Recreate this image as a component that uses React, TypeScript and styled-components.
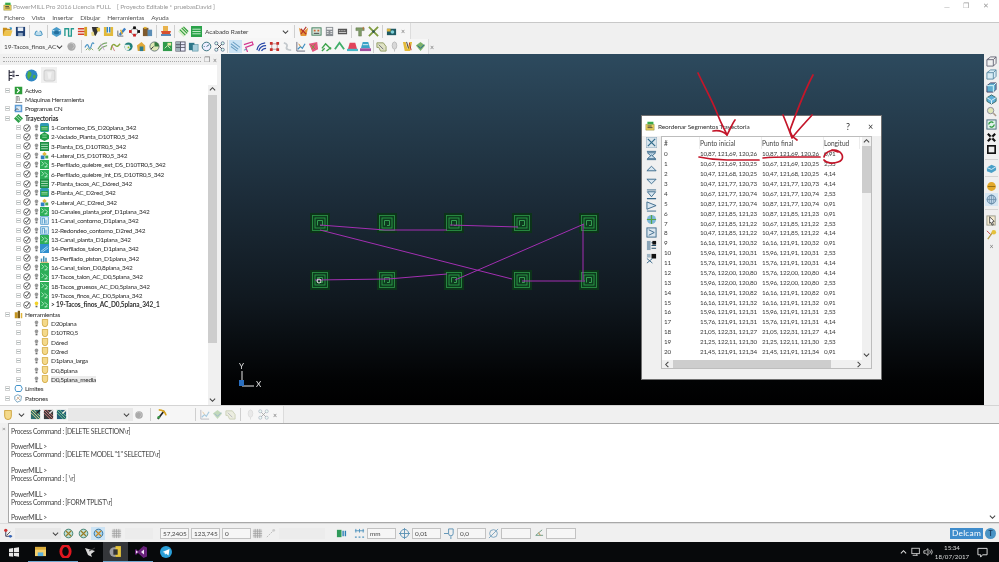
import React from 'react';
import styled, { createGlobalStyle } from 'styled-components';

const Global = createGlobalStyle`
  html, body { margin: 0; padding: 0; background: #f0f0f0; }
  body { font-family: Lato, "Liberation Sans", sans-serif; }
`;

const ICONS: Record<string, React.ReactNode> = {
  folder: <><path d="M1 2h4l1 1h4v2H4L2 10H1z" fill="#c98f1c" /><path d="M3 5h8.500l-2 6H1z" fill="#eec34d" /><path d="M8 1l3 1-1 3z" fill="#2b8fc9" /></>,
  save: <><rect x="1" y="1" width="10" height="10" fill="#1f3f73" /><rect x="3" y="1.500" width="6" height="4" fill="#e8eef5" /><rect x="3.500" y="7.500" width="5" height="3.500" fill="#8fa6c2" /></>,
  blob: <><path d="M2 9a4 4 0 1 1 8 0c1 2-8 2-8 0z" fill="#bcdcec" stroke="#3a8cbc" /><circle cx="6" cy="5" r="1.500" fill="#f5f5f5" /></>,
  cube: <><path d="M1 4l5-3 5 3v5l-5 3-5-3z" fill="#4a9cc9" /><path d="M1 4l5 3 5-3" fill="none" stroke="#e4f2fa" /><ellipse cx="6" cy="7" rx="3" ry="2" fill="#246f9e" /></>,
  path: <path d="M1 11V3h4v8h3V3h3" fill="none" stroke="#259a8f" strokeWidth="1.500" />,
  stack: <><path d="M1 3h7M1 6h9M1 9h7" stroke="#d8402a" strokeWidth="1.800" /><rect x="8" y="1" width="3" height="10" fill="#d6a326" /></>,
  drill: <><path d="M2 1h7v4l-3 6-1-1-1 0z" fill="#333" /><path d="M7 2h4v4H8z" fill="#e2c13a" /><path d="M1 7l3-1 1 5H2z" fill="#e8d98a" /></>,
  ublue: <><path d="M1 1h3v7h4V1h3v10H1z" fill="#e2b93a" /><path d="M4 1h1.500v6H4zM6.500 1H8v6H6.500z" fill="#2c83c7" /></>,
  pen: <><path d="M2 11V5M2 11h6" stroke="#666" /><path d="M3 9l6-7 2 1.500-6 7z" fill="#3d7fc4" /><path d="M5 4l2 5" stroke="#e2b12c" strokeWidth="1.500" /></>,
  nodes: <><path d="M6 1l5 5-5 5-5-5z" fill="none" stroke="#444" strokeDasharray="2 1" /><rect x="4.500" y=".5" width="3" height="3" fill="#111" /><rect x="0" y="4.500" width="3" height="3" fill="#c22" /><rect x="9" y="4.500" width="3" height="3" fill="#111" /><rect x="4.500" y="8.500" width="3" height="3" fill="#c22" /></>,
  chip: <><rect x="1" y="2" width="6" height="9" fill="#7f5a2e" /><rect x="6" y="4" width="5" height="7" fill="#5b8db5" /><path d="M2 1h3v2H2z" fill="#e2b12c" /></>,
  cup: <><path d="M3 1h5v5H3z" fill="#e9b34c" /><path d="M1 6h10l-1 3H2z" fill="#d8502f" /><rect x="1" y="9" width="10" height="2" fill="#5b88b5" /></>,
  stripes: <><path d="M6 0l6 6-6 6-6-6z" fill="#d8efc8" /><path d="M2 4l6 6M4 2l6 6M6 1l5 5" stroke="#2f9a3c" strokeWidth="1.200" /></>,
  greenbox: <><rect x="0" y="0" width="12" height="12" fill="#2ba24a" /><path d="M1.500 3.500h9M1.500 6h9M1.500 8.500h9" stroke="#c8f0d0" /></>,
  orange: <><path d="M1 2l5 4 5-4-2 9H3z" fill="#e39538" /><path d="M3 3l6 6M9 1l-6 8" stroke="#b5302a" strokeWidth="1.200" /></>,
  calc: <><rect x="1" y="2" width="10" height="8" fill="#d6e6dc" stroke="#3f7d5a" /><path d="M3 4h2v2H3zM7 4h2v2H7z" fill="#c63" /><path d="M3 8h6" stroke="#333" /></>,
  bin: <><rect x="2" y="1" width="8" height="10" fill="#8a8f94" /><rect x="3" y="2" width="6" height="2" fill="#f0f0f0" /><path d="M3 6h2M7 6h2M3 8h2M7 8h2" stroke="#eee" /></>,
  ruler: <><rect x="1" y="3" width="10" height="6" fill="#555" /><path d="M2 5h1M4 5h1M6 5h1M8 5h1M2 7h8" stroke="#ddd" /></>,
  tee: <><path d="M1 2h9v3H7v6H4V5H1z" fill="#7f9d68" stroke="#5b6b44" strokeWidth=".5" /><path d="M9 1v3" stroke="#c63" /></>,
  cross: <><path d="M1 1l10 10M11 1L1 11" stroke="#7e9b3e" strokeWidth="2" /><circle cx="6" cy="6" r="1.500" fill="#355" /></>,
  cam: <><rect x="1" y="3" width="10" height="7" fill="#1f5a63" /><rect x="1" y="3" width="4" height="3" fill="#d8b13b" /><circle cx="7" cy="6.500" r="2" fill="#7fd0d8" /></>,
  ball: <><circle cx="6" cy="6" r="4.500" fill="#aaa" /><path d="M3 4l2-2 3 1 1 3-2 3" fill="none" stroke="#c8c8c8" /></>,
  swirl: <><path d="M1 7c2-4 3-4 4-1s2 3 3-1 2-3 3-2" fill="none" stroke="#4a95c4" strokeWidth="1.300" /><path d="M2 10l2-2 2 2 2-2 2 2" fill="none" stroke="#86a868" /></>,
  swirl2: <><path d="M1 9c3-6 6-7 10-7M2 11c3-5 6-5 9-6" fill="none" stroke="#7ba66a" strokeWidth="1.200" /><path d="M4 3l4 7" stroke="#c7a4d4" /></>,
  swirl3: <><path d="M1 10c1-7 3-7 5-5s3 0 5-2" fill="none" stroke="#8aa83c" strokeWidth="1.500" /><path d="M2 5l3 6" stroke="#c77" /></>,
  round: <><circle cx="6" cy="6" r="4.500" fill="#1f7f7a" /><path d="M1 4h6l1 3-2 3H3z" fill="#e8f0ea" /><circle cx="6" cy="7" r="1" fill="#9b2" /></>,
  house: <><path d="M1 5l5-4 4 4v6H2z" fill="#e0a93a" /><path d="M4 6h4v5H4z" fill="#2d7d8f" /></>,
  pie: <><circle cx="6" cy="6" r="5" fill="#dfe8b6" stroke="#677" /><path d="M6 6V1a5 5 0 0 1 5 5z" fill="#357a3f" /><path d="M2 9l3-3" stroke="#223" /></>,
  boxes: <><rect x="1" y="1" width="10" height="10" fill="#2f9a4a" /><path d="M3 8l3-3 3 3" stroke="#d9f0c2" fill="none" /><rect x="6" y="2" width="4" height="3" fill="#e8e8a0" /></>,
  grid: <><rect x="1" y="1" width="10" height="10" fill="#eef" stroke="#556" /><rect x="1" y="1" width="5" height="10" fill="#9fb0b8" /><path d="M1 4h10M1 7h10M6 1v10" stroke="#556" /></>,
  copy: <><rect x="1" y="2" width="6" height="8" fill="#2d7588" /><rect x="5" y="4" width="6" height="7" fill="#a9cfdc" stroke="#2d7588" strokeWidth=".5" /></>,
  gauge: <><circle cx="6" cy="6" r="4.700" fill="#eef" stroke="#2d6b77" /><path d="M6 6l3-2M3 6h1" stroke="#2d6b77" /></>,
  xnodes: <><path d="M2 2l8 8M10 2l-8 8" stroke="#333" strokeWidth=".9" /><circle cx="2.500" cy="2.500" r="1.700" fill="#dfe" stroke="#236" strokeWidth=".6" /><circle cx="9.500" cy="2.500" r="1.700" fill="#dfe" stroke="#236" strokeWidth=".6" /><circle cx="2.500" cy="9.500" r="1.700" fill="#dfe" stroke="#236" strokeWidth=".6" /><circle cx="9.500" cy="9.500" r="1.700" fill="#dfe" stroke="#236" strokeWidth=".6" /></>,
  waves: <><path d="M1 3l8 6M1 6l7 5M3 1l8 6" fill="none" stroke="#6a9fc4" strokeWidth="1.100" /></>,
  wedge: <><path d="M1 4l9-3 1 3-8 3 2 5" fill="none" stroke="#d3358f" strokeWidth="1.300" /><path d="M1 10l3-1" stroke="#4e96b8" /></>,
  ripple: <><path d="M1 10c1-5 3-7 9-8M3 11c1-4 3-6 8-6M6 11c1-2 2-3 5-3" fill="none" stroke="#2546a8" strokeWidth="1.300" /></>,
  squares: <><path d="M3 3h6v6H3z" fill="none" stroke="#b99" /><path d="M1 1h3v3H1zM8 1h3v3H8zM1 8h3v3H1zM8 8h3v3H8z" fill="#c8302a" /></>,
  faint: <path d="M2 2c4 1 4 3 3 5s3 3 5 3" fill="none" stroke="#c3c8cc" strokeWidth="2" />,
  fork: <><path d="M2 11V1M2 11h9" stroke="#667" /><path d="M3 9l3-3 2 2 3-5" fill="none" stroke="#3f8fc0" strokeWidth="1.300" /><path d="M4 3l2 3" stroke="#d68a2a" /></>,
  cone: <><path d="M1 3l9-2 1 8-6 3z" fill="#e5547f" /><path d="M3 4l5 5M8 3l-4 6" stroke="#7a9640" /></>,
  green2: <path d="M1 8l4-5 6 6M1 11l3-3M6 11l5-4" fill="none" stroke="#3ca34a" strokeWidth="1.500" />,
  green3: <path d="M1 9l5-7 5 7" fill="none" stroke="#3fae6a" strokeWidth="2" />,
  hatred: <><path d="M3 2h6l2 7H1z" fill="#e2435a" /><rect x="0" y="8.500" width="12" height="2.500" fill="#48b8c8" /></>,
  hatblue: <><path d="M3 1h6l2 7H1z" fill="#3aa3c7" /><path d="M3 4h6" stroke="#e4f2fa" /><rect x="0" y="8" width="12" height="3" fill="#a24e9e" /></>,
  sand: <><path d="M1 2h7l3 4v5H5L3 7H1z" fill="#dfe2c4" stroke="#8f9a60" /><path d="M3 4l5 5" stroke="#667" /></>,
  pin: <><ellipse cx="6" cy="5" rx="2.500" ry="4" fill="#d8d8d8" stroke="#bbb" /><path d="M6 9v2.500" stroke="#bbb" /></>,
  cutter: <><path d="M1 1h3l2 8 2-8h3l-2 10H3z" fill="#e4bb3a" /><path d="M5 1l2 7" stroke="#333" /><path d="M8 2l2 8" stroke="#b33" /></>,
  blockgreen: <><path d="M1 5l5-4 5 4-5 6z" fill="#7cb26a" /><path d="M3 5l3 3 4-4" stroke="#1e5ea0" fill="none" /></>,
  hatch1: <><rect x="1" y="1" width="10" height="10" fill="#2f6f6f" /><path d="M1 1l10 10M4 1l7 7M1 4l7 7" stroke="#e8d98a" /><path d="M11 1L7 5" stroke="#222" strokeWidth="1.500" /></>,
  hatch2: <><rect x="1" y="1" width="10" height="10" fill="#3d3d3d" /><path d="M1 1l10 10M4 1l7 7M1 4l7 7" stroke="#d87a7a" /><path d="M11 1L7 5" stroke="#ddd" strokeWidth="1.500" /></>,
  hatch3: <><rect x="1" y="1" width="10" height="10" fill="#245f77" /><path d="M1 1l10 10M4 1l7 7M1 4l7 7" stroke="#7cd08a" /><path d="M11 1L7 5" stroke="#eed" strokeWidth="1.500" /></>,
  pick: <><path d="M2 11l7-9" stroke="#222" strokeWidth="1.800" /><path d="M3 1c4 0 7 2 8 6" fill="none" stroke="#d9a520" strokeWidth="1.800" /><circle cx="3" cy="9" r="1.500" fill="#3a9a4a" /></>,
  axes: <><path d="M3 2v7h7" stroke="#335" fill="none" /><circle cx="3" cy="2.500" r="1.800" fill="#c33" /><circle cx="8" cy="9" r="1.500" fill="#36b" /><path d="M4 8l4-4" stroke="#555" /></>,
  tpBox: <><rect x="0" y="0" width="12" height="12" fill="#2f9ab5" rx="2" /><rect x="1" y="4" width="10" height="7" fill="#2ba24a" /><path d="M2 6h8M2 8h8" stroke="#bfeacb" strokeWidth=".8" /></>,
  tp3d: <><path d="M0 4l6-4 6 4v5l-6 3-6-3z" fill="#1f9b44" /><path d="M3 4h6M3 7h6" stroke="#a9e8b8" /></>,
  tpStr: <><rect x="0" y="0" width="12" height="12" fill="#1e9246" /><path d="M1.500 3h9M1.500 6h9M1.500 9h9" stroke="#d0f2da" strokeWidth="1" /></>,
  tpCross: <><path d="M6 1l3 3-3 3-3-3z" fill="#e2b73a" /><path d="M1 6h5v5H1z" fill="#2d7fc0" /><path d="M7 6h4v4H7z" fill="#45a850" /></>,
  tpGreen: <><rect x="0" y="0" width="12" height="12" fill="#2dae58" /><path d="M2 2l3 3-3 3M6 3l4 3-3 4M6 9h4" fill="none" stroke="#c9f5d8" strokeWidth="1" /></>,
  tpCont: <><rect x="1" y="1" width="10" height="10" fill="#dff1f7" stroke="#2f86c3" /><path d="M3 10V3h3v7M8 10V5" stroke="#2f86c3" fill="none" /></>,
  tpDiag: <><rect x="0" y="0" width="12" height="12" fill="#2f8fce" /><path d="M1 10l9-7M3 11l8-6" stroke="#c8f0ff" /></>,
  tpFan: <><path d="M1 11V6h2v5M4 11V3h2v8M7 11V5h2v6" fill="#3f8fb5" /><path d="M1 11h10" stroke="#d69a2a" /></>,
  dlgX: <><rect x="0" y="0" width="12" height="12" fill="#d8e4ec" stroke="#8aa5b8" /><path d="M2 2l8 8M10 2l-8 8" stroke="#2f6a8a" strokeWidth="1.300" /></>,
  dlgTop: <><path d="M1 1.500h10M1 10.500h10" stroke="#38688a" /><path d="M1.500 3l9 0-4.500 4z" fill="#c8dcea" stroke="#38688a" /><path d="M1.500 9.500l9 0-4.500-4z" fill="#c8dcea" stroke="#38688a" /></>,
  dlgUp: <path d="M1 8.500h10L6 3.500z" fill="#d8e6f0" stroke="#38688a" />,
  dlgDown: <path d="M1 3.500h10L6 8.500z" fill="#d8e6f0" stroke="#38688a" />,
  dlgBot: <><path d="M1 10.500h10" stroke="#38688a" strokeWidth="1.400" /><path d="M1.500 3h9L6 8.500z" fill="#d8e6f0" stroke="#38688a" /><path d="M1 1h10" stroke="#38688a" /></>,
  dlgSwap: <><path d="M1 1l10 4v0L1 9z" fill="#d8e6f0" stroke="#38688a" /><path d="M1 11h10" stroke="#38688a" /></>,
  dlgGlobe: <><circle cx="6" cy="6" r="5" fill="#7db8d8" /><path d="M1 6h10M6 1v10" stroke="#58a248" strokeWidth="1.300" /></>,
  dlgList: <><rect x="1" y="1" width="10" height="10" fill="#dbe6ee" stroke="#38688a" /><path d="M3 3l6 3-6 3" stroke="#38688a" fill="none" /></>,
  dlgDots: <><rect x="1" y="1" width="4" height="10" fill="#8aa5b8" /><path d="M6 3l5 0M6 6l5 0M6 9l5 0" stroke="#25506b" strokeWidth="1.200" /><rect x="7" y="1" width="4" height="4" fill="#111" /></>,
  dlgMore: <><rect x="6" y="1" width="5" height="5" fill="#111" /><path d="M1 6l6 5M1 11l6-5" stroke="#38688a" /><rect x="1" y="1" width="4" height="4" fill="#9fb5c4" /></>,
  wire: <path d="M1 4l4-3h6v7l-3 3H1zM1 4h7v7M8 4l3-3" fill="none" stroke="#667" />,
  wire2: <><path d="M1 4l4-3h6v7l-3 3H1z" fill="#d8ecf5" stroke="#5b8ba5" /><path d="M1 4h7v7M8 4l3-3" fill="none" stroke="#5b8ba5" /></>,
  wire3: <><path d="M1 4l4-3h6v7l-3 3H1z" fill="#5faed0" stroke="#446" /><path d="M1 4h7v7M8 4l3-3" fill="none" stroke="#dff" /></>,
  wire4: <><path d="M1 4l5-3 5 3v4l-5 3-5-3z" fill="#5fb0d8" stroke="#366" /><path d="M1 4l5 3 5-3M6 7v4" fill="none" stroke="#e6f5fc" /></>,
  zoomi: <><circle cx="5" cy="5" r="3.500" fill="#dfe7b8" stroke="#889" /><path d="M8 8l3 3" stroke="#a98" strokeWidth="1.600" /></>,
  refresh: <><rect x="1" y="1" width="10" height="10" fill="#dff1ea" stroke="#467" /><path d="M3 6a3 3 0 0 1 5-2M9 6a3 3 0 0 1-5 2" fill="none" stroke="#2a9a3c" strokeWidth="1.400" /></>,
  blackx: <><path d="M2 2l8 8M10 2l-8 8" stroke="#111" strokeWidth="2.400" /><circle cx="6" cy="6" r="1.400" fill="#fff" /></>,
  blacksq: <><rect x="2" y="2" width="8" height="8" fill="#eee" stroke="#111" strokeWidth="1.800" /></>,
  part: <><path d="M1 5l5-3 5 2v4l-5 3-5-2z" fill="#4ba0c8" /><path d="M1 5l5 2 5-3" stroke="#dff3fa" fill="none" /></>,
  sphere: <><circle cx="6" cy="6" r="4.800" fill="#e2a92b" /><path d="M2 6h8" stroke="#8f6a16" /></>,
  orb: <><circle cx="6" cy="6" r="4.800" fill="#bcd3e6" stroke="#6085a3" /><path d="M1 6h10M6 1v10" stroke="#6085a3" strokeWidth=".7" /><ellipse cx="6" cy="6" rx="2.500" ry="4.800" fill="none" stroke="#6085a3" strokeWidth=".7" /></>,
  cursorbox: <><rect x="1" y="1" width="9" height="10" fill="#f4ead0" stroke="#998" /><path d="M4 2l5 5-2 .5 1 3-1.500 .5-1-3L4 9z" fill="#fff" stroke="#222" strokeWidth=".8" /></>,
  keys: <><path d="M2 11l5-7" stroke="#b9a24c" strokeWidth="1.500" /><circle cx="8.500" cy="3.500" r="2.500" fill="#e5c13c" /><path d="M1 2l4 4" stroke="#c04040" /></>,
  wheels: <><circle cx="6" cy="6" r="4.700" fill="#bde0d8" stroke="#3b7d6f" /><path d="M3 3l6 6M3 9l6-6" stroke="#9a7c24" strokeWidth="1.200" /></>,
  wheelsblue: <><circle cx="6" cy="6" r="4.700" fill="#a9d4ec" stroke="#2c6f9f" /><path d="M3 3l6 6M3 9l6-6" stroke="#c8871f" strokeWidth="1.200" /></>,
  meshgrid: <><rect x="1" y="1" width="10" height="10" fill="#ddd" /><path d="M1 3.500h10M1 6h10M1 8.500h10M3.500 1v10M6 1v10M8.500 1v10" stroke="#999" strokeWidth=".7" /></>,
  statusgreen: <><rect x="1" y="2" width="5" height="8" fill="#2f9a5a" /><rect x="7" y="3" width="1.500" height="6" fill="#2a7fb5" /><rect x="9.500" y="3" width="1.500" height="6" fill="#2a7fb5" /></>,
  statusruler: <><path d="M1 3h10M2 1v4M6 1v4M10 1v4" stroke="#4f93bd" /><path d="M1 10h2M5 10h2M9 10h2" stroke="#4f93bd" strokeWidth="1.500" /></>,
  crosshair: <><circle cx="6" cy="6" r="4.500" fill="none" stroke="#5a90b3" /><path d="M0 6h12M6 0v12" stroke="#5a90b3" /></>,
  toolin: <><path d="M0 6h5" stroke="#5a90b3" /><path d="M5 1h5v5a2.500 2.500 0 0 1-5 0z" fill="none" stroke="#5a90b3" /><path d="M7.500 9v3" stroke="#5a90b3" /></>,
  dia: <><circle cx="6" cy="6" r="4.200" fill="none" stroke="#7aa2be" /><path d="M1 11L11 1" stroke="#7aa2be" /></>,
  angle: <><path d="M10 2L3 8h8" fill="none" stroke="#6b9a82" /><path d="M6 5l2 3" stroke="#c58a40" /></>,
  diag: <><path d="M2 10l8-8" stroke="#bbb" strokeDasharray="2 1" /><circle cx="9.500" cy="2.500" r="1.500" fill="#ccc" /></>,
  win: <path d="M0 2l5-.7V6H0zM6 1.200L12 .3V6H6zM0 7h5v4.700L0 11zM6 7h6v4.700l-6-.9z" fill="#e8e8e8" />,
  explorer: <><rect x="0" y="1" width="12" height="10" fill="#f3cf6b" /><rect x="0" y="1" width="12" height="3" fill="#d9ab3a" /><rect x="3" y="7" width="6" height="4" fill="#5ab0e0" /></>,
  opera: <ellipse cx="6" cy="6" rx="4.300" ry="5.500" fill="none" stroke="#e0161f" strokeWidth="2.600" />,
  gadget: <><path d="M1 2l10 3-4 3 1 3-4-2z" fill="#d8d8d8" /><path d="M5 5l6-3" stroke="#444" /></>,
  pm: <><circle cx="5" cy="6.500" r="4.500" fill="#9a9aa0" /><path d="M6 1h5v10H6z" fill="#e5c33a" /><path d="M4 4h4v5H4z" fill="#333" /></>,
  vs: <><path d="M8.500 0l3.500 1.500v9L8.500 12 3 7l-2 2-1-1V4l1-1 2 2z" fill="#68217a" /><path d="M9 3.500L6 6l3 2.500z" fill="#f2e6f6" /><path d="M1 4.500l2 1.500-2 1.500z" fill="#f2e6f6" /></>,
  telegram: <><circle cx="6" cy="6" r="6" fill="#2a9fd8" /><path d="M2.500 6l7-3-1 6.500-2.500-2-1 1.300-.5-2.300z" fill="#fff" /></>,
  bulb: <><path d="M2.800 4a3.200 3.200 0 1 1 6.400 0c0 1.500-1.400 2.200-1.400 3.500H4.200C4.200 6.200 2.800 5.500 2.800 4z" fill="#9a9a9a" /><rect x="4.400" y="8.300" width="3.200" height="2.500" fill="#666" /></>,
  bulbon: <><path d="M2.800 4a3.200 3.200 0 1 1 6.400 0c0 1.500-1.400 2.200-1.400 3.500H4.200C4.200 6.200 2.800 5.500 2.800 4z" fill="#f2d22a" /><rect x="4.400" y="8.300" width="3.200" height="2.500" fill="#666" /></>,
  check: <><circle cx="6" cy="6" r="5" fill="#fff" stroke="#333" strokeWidth="1" /><path d="M3.200 6l2 2.200L9 3" fill="none" stroke="#111" strokeWidth="1.200" /></>,
  tool: <><path d="M2 .5h8v7a4 4 0 0 1-8 0z" fill="#f4d98a" stroke="#c99a2a" /></>,
  active: <><rect x="1" y="1" width="10" height="10" fill="#2d9c3a" /><path d="M4 3l3 3-3 3" fill="none" stroke="#fff" strokeWidth="1.500" /></>,
  machine: <><path d="M2 10h9M3 10V2M5 2v6M7 3v5M3 2h4" stroke="#777" fill="none" /></>,
  cn: <><rect x="1" y="1" width="10" height="10" fill="#5b9bd5" /><path d="M3 3h6v6H3z" fill="#d9e8f5" /><path d="M1 9l3-3 2 2" stroke="#333" fill="none" /></>,
  traj: <><path d="M6 0l6 6-6 6-6-6z" fill="#2fa04a" /><path d="M3 4l5 5M5 2.500l5 5" stroke="#d6f5df" /></>,
  tools: <><path d="M1 3h4v8H1z" fill="#c4941f" /><path d="M5 1h3v10H5z" fill="#7a5c1a" /><path d="M9 4h2v7H9z" fill="#e0b43a" /></>,
  limit: <path d="M3 2h6l2 4-2 4H3C1 8 1 4 3 2z" fill="none" stroke="#3a8fc9" strokeWidth="1.300" />,
  pattern: <><path d="M1 3l4-2 5 2-1 6-5 2-3-4z" fill="none" stroke="#5c92b3" /><path d="M4 4l4 4M8 3L3 8" stroke="#c0a080" /></>,
  tab1: <><path d="M2 1v10M2 3h3M2 6h3M2 9h3" stroke="#223" fill="none" /><rect x="5" y="1.500" width="2" height="2.500" fill="#556" /><rect x="5" y="5" width="2" height="2.500" fill="#556" /><path d="M8 6h3" stroke="#223" /></>,
  earth: <><circle cx="6" cy="6" r="5.500" fill="#2e86c4" /><path d="M3 2c2 0 3 1 3 3S4 7 4 9 2 8 2 6z" fill="#4fae46" /><path d="M8 5l2 1-1 3-2-1z" fill="#4fae46" /></>,
  ghost: <><rect x="1" y="1" width="10" height="10" rx="2" fill="#e4e4e4" stroke="#d0d0d0" /><path d="M4 3h4l-1 6H5z" fill="#f2f2f2" /></>,
  dlgIcon: <><path d="M1 4h10v7H1z" fill="#e9cf5e" stroke="#7a7a2a" strokeWidth=".5" /><path d="M3 4V1h7v3" fill="#3fa64a" stroke="#1e5" strokeWidth=".2" /><path d="M3 6h5M3 8h6" stroke="#333" /></>,
  monitor: <><rect x="1" y="1.500" width="9" height="6.500" fill="none" stroke="#ddd" /><path d="M7 8v2M2 10h6" stroke="#ddd" /></>,
  speaker: <><path d="M1 4.500h2L6 2v8L3 7.500H1z" fill="none" stroke="#ddd" /><path d="M8 4a3 3 0 0 1 0 4M10 3a5 5 0 0 1 0 6" fill="none" stroke="#ddd" /></>,
  notif: <path d="M1 1.500h10v7H6L4 11V8.500H1z" fill="none" stroke="#e8e8e8" />,
};

const IconSvg = styled.svg<{ $dim?: boolean }>`
  display: block;
  flex: none;
  opacity: ${p => (p.$dim ? 0.42 : 1)};
`;

function Ico({ k, s = 11, dim }: { k: string; s?: number; dim?: boolean }) {
  return <IconSvg $dim={dim} width={s} height={s} viewBox="0 0 12 12">{ICONS[k]}</IconSvg>;
}

const Chev = ({ up, left, right, c = '#444' }: { up?: boolean; left?: boolean; right?: boolean; c?: string }) => {
  const d = up ? 'M1 5l3-3 3 3' : left ? 'M5 1L2 4l3 3' : right ? 'M3 1l3 3-3 3' : 'M1 3l3 3 3-3';
  return <IconSvg width={7} height={7} viewBox="0 0 8 8"><path d={d} fill="none" stroke={c} strokeWidth="1.200" /></IconSvg>;
};

const Page = styled.div`
  position: relative;
  width: 999px;
  height: 562px;
  overflow: hidden;
  display: flex;
  flex-direction: column;
  background: #f0f0f0;
  color: #333;
  font-size: 6.7px;
  filter: blur(0.4px);
`;

const TitleBar = styled.div`
  height: 12px;
  background: #fff;
  display: flex;
  align-items: center;
  padding-left: 3px;
  gap: 1px;
  color: #9a9a9a;
  font-size: 6.5px;
  letter-spacing: -0.13px;
  white-space: pre;
`;
const WinControls = styled.div`
  margin-left: auto;
  display: flex;
  align-items: center;
  gap: 14px;
  padding-right: 10px;
  color: #999;
`;
const MenuBar = styled.div`
  height: 10px;
  background: #fff;
  display: flex;
  align-items: center;
  padding-left: 4px;
  gap: 7px;
  font-size: 6.5px;
  letter-spacing: -0.12px;
  color: #555;
  border-bottom: 1px solid #c8c8c8;
  box-sizing: content-box;
`;
const ToolRow = styled.div<{ $h: number }>`
  height: ${p => p.$h}px;
  display: flex;
  align-items: center;
  background: #f0f0f0;
`;
const Strip = styled.div<{ $w: number; $pl?: number }>`
  width: ${p => p.$w}px;
  box-sizing: border-box;
  padding-left: ${p => p.$pl ?? 1}px;
  height: 100%;
  display: flex;
  align-items: center;
  background: #f6f6f6;
  border-right: 1px solid #dcdcdc;
`;
const Slot = styled.div<{ $w?: number; $hi?: boolean }>`
  width: ${p => p.$w ?? 13}px;
  height: 13px;
  flex: none;
  display: flex;
  align-items: center;
  justify-content: center;
  background: ${p => (p.$hi ? '#cde4f5' : 'transparent')};
`;
const Sep = styled.div<{ $w?: number; $c?: string }>`
  width: ${p => p.$w ?? 5}px;
  height: 13px;
  flex: none;
  display: flex;
  justify-content: center;
  &::after { content: ""; width: 1px; height: 100%; background: ${p => p.$c ?? '#cfcfcf'}; }
`;
const CloseMark = styled.span`
  color: #777;
  font-size: 7px;
  width: 10px;
  text-align: center;
  flex: none;
`;
const Combo = styled.div<{ $w: number; $bg?: string }>`
  width: ${p => p.$w}px;
  height: 13px;
  flex: none;
  box-sizing: border-box;
  background: ${p => p.$bg ?? '#f8f8f8'};
  display: flex;
  align-items: center;
  padding: 0 3px 0 2px;
  color: #444;
  font-size: 6.5px;
  letter-spacing: -0.1px;
  white-space: nowrap;
  & > svg:last-child { margin-left: auto; }
`;

const Main = styled.div`
  height: 351px;
  display: flex;
`;
const LeftPanel = styled.div`
  width: 221px;
  flex: none;
  display: flex;
  flex-direction: column;
  box-sizing: border-box;
  padding-right: 4px;
`;
const PanelHead = styled.div`
  height: 11px;
  display: flex;
  align-items: center;
  padding-left: 3px;
  gap: 3px;
  color: #777;
`;
const Grip = styled.div`
  flex: 1;
  height: 3px;
  border-top: 1px dotted #aaa;
  border-bottom: 1px dotted #aaa;
`;
const TabBar = styled.div`
  height: 20px;
  background: #fff;
  display: flex;
  align-items: center;
  padding-left: 5px;
  gap: 2px;
`;
const Tab = styled.div<{ $on?: boolean }>`
  width: 16px;
  height: 16px;
  display: flex;
  align-items: center;
  justify-content: center;
  background: ${p => (p.$on ? '#fff' : '#f0f0f0')};
`;
const TreeBox = styled.div`
  flex: 1;
  min-height: 0;
  display: flex;
  background: #fff;
`;
const Tree = styled.div`
  flex: 1;
  min-width: 0;
  padding-top: 0.6px;
  padding-left: 5px;
  overflow: hidden;
`;
const TreeRow = styled.div<{ $bold?: boolean; $hl?: boolean }>`
  height: 9.33px;
  display: flex;
  align-items: center;
  white-space: nowrap;
  font-size: 6.5px;
  letter-spacing: ${p => (p.$bold ? '-0.15px' : '-0.3px')};
  font-weight: ${p => (p.$bold ? 700 : 400)};
  color: #2f2f2f;
`;
const Label = styled.span<{ $hl?: boolean }>`
  background: ${p => (p.$hl ? '#ececec' : 'transparent')};
  margin-left: 2px;
`;
const Expander = styled.div<{ $ml?: number }>`
  width: 5px;
  height: 5px;
  flex: none;
  margin-left: ${p => p.$ml ?? 0}px;
  border: 1px solid #d4d4d4;
  box-sizing: border-box;
  position: relative;
  &::after { content: ""; position: absolute; left: 0; right: 0; top: 1px; height: 1px; background: #a9b5b5; }
`;
const TreeGap = styled.div<{ $w: number }>`
  width: ${p => p.$w}px;
  flex: none;
`;
const VScroll = styled.div<{ $w: number; $thumbTop: number; $thumbH: number }>`
  width: ${p => p.$w}px;
  flex: none;
  background: #f0f0f0;
  position: relative;
  &::after {
    content: "";
    position: absolute;
    left: 0; right: 0;
    top: ${p => p.$thumbTop}px;
    height: ${p => p.$thumbH}px;
    background: #cdcdcd;
  }
`;
const ScrollArrow = styled.div<{ $bottom?: boolean }>`
  position: absolute;
  left: 0; right: 0;
  ${p => (p.$bottom ? 'bottom: 2px;' : 'top: 1px;')}
  display: flex;
  justify-content: center;
`;

const Viewport = styled.div`
  flex: 1;
  position: relative;
  background: linear-gradient(180deg, #2d4a5e 0%, #1c2c39 41%, #10181f 70%, #020304 93%, #000 100%);
`;
const SceneSvg = styled.svg`
  position: absolute;
  inset: 0;
  display: block;
`;
const RightBar = styled.div`
  width: 15px;
  flex: none;
  display: flex;
  flex-direction: column;
  align-items: center;
  padding-top: 1px;
`;
const RSlot = styled.div<{ $h?: number; $hi?: boolean }>`
  width: 13px;
  height: ${p => p.$h ?? 13}px;
  flex: none;
  display: flex;
  align-items: center;
  justify-content: center;
  background: ${p => (p.$hi ? '#d5e6f3' : 'transparent')};
`;
const RSep = styled.div`
  width: 13px;
  height: 1px;
  margin: 3px 0;
  background: #d4d4d4;
  flex: none;
`;

const Dialog = styled.div`
  position: absolute;
  left: 420px;
  top: 61px;
  width: 241px;
  height: 265px;
  background: #f0f0f0;
  border: 1px solid #707070;
  box-sizing: border-box;
  display: flex;
  flex-direction: column;
`;
const DialogTitle = styled.div`
  height: 20px;
  flex: none;
  background: #fff;
  display: flex;
  align-items: center;
  padding-left: 3px;
  gap: 3px;
  font-size: 6.5px;
  letter-spacing: -0.13px;
  color: #333;
`;
const DialogButtons = styled.div`
  margin-left: auto;
  display: flex;
  align-items: center;
  gap: 18px;
  padding-right: 8px;
  font-size: 9px;
`;
const DialogBody = styled.div`
  flex: none;
  display: flex;
  height: 233px;
  padding-left: 3px;
`;
const DialogTools = styled.div`
  width: 13px;
  flex: none;
  margin-right: 3px;
  display: flex;
  flex-direction: column;
`;
const DialogTool = styled.div`
  width: 13px;
  height: 12.9px;
  flex: none;
  display: flex;
  align-items: center;
  justify-content: center;
`;
const TablePanel = styled.div`
  width: 211px;
  flex: none;
  box-sizing: border-box;
  border: 1px solid #bdbdbd;
  background: #fff;
  display: flex;
  flex-direction: column;
`;
const TableTop = styled.div`
  flex: 1;
  min-height: 0;
  display: flex;
`;
const TableList = styled.div`
  flex: 1;
  min-width: 0;
  overflow: hidden;
`;
const Cols = styled.div<{ $head?: boolean }>`
  display: grid;
  grid-template-columns: 36px 62px 62px 36px;
  height: ${p => (p.$head ? '12px' : '9.88px')};
  align-items: center;
  padding-left: 2px;
  font-size: ${p => (p.$head ? '6.6px' : '6.3px')};
  letter-spacing: ${p => (p.$head ? '0' : '-0.22px')};
  white-space: nowrap;
  color: ${p => (p.$head ? '#444' : '#3a3a3a')};
`;
const HeadCell = styled.div`
  height: 100%;
  display: flex;
  align-items: center;
  border-right: 1px solid #ececec;
  box-sizing: border-box;
`;
const HScroll = styled.div`
  height: 8px;
  flex: none;
  background: #f0f0f0;
  display: flex;
  align-items: center;
  gap: 1px;
  padding: 0 5px 0 2px;
`;
const HThumb = styled.div`
  width: 158px;
  height: 100%;
  background: #cdcdcd;
  margin-left: 1px;
`;

const LowerBar = styled.div`
  height: 18px;
  flex: none;
  display: flex;
  align-items: center;
  border-top: 1px solid #d4d4d4;
  box-sizing: border-box;
  background: #f0f0f0;
`;
const ConsoleRow = styled.div`
  height: 100px;
  flex: none;
  display: flex;
`;
const ConsoleSide = styled.div`
  width: 8px;
  flex: none;
  color: #777;
  font-size: 6.500px;
  text-align: center;
  padding-top: 2px;
  box-sizing: border-box;
`;
const ConsoleBox = styled.div`
  flex: 1;
  min-width: 0;
  background: #fff;
  border: 1px solid #a8a8a8;
  border-right: none;
  display: flex;
`;
const ConsoleText = styled.pre`
  flex: 1;
  margin: 0;
  padding: 3.5px 0 0 2px;
  font: 6.7px/7.9px Lato, "Liberation Sans", sans-serif;
  letter-spacing: -0.28px;
  color: #444;
  overflow: hidden;
`;
const ConsoleScroll = styled.div`
  width: 13px;
  flex: none;
  display: flex;
  align-items: flex-end;
  justify-content: center;
  padding-bottom: 2px;
`;
const StatusBar = styled.div`
  height: 19px;
  flex: none;
  display: flex;
  align-items: center;
  background: #f0f0f0;
  padding-left: 2px;
  border-top: 1px solid #dcdcdc;
  box-sizing: border-box;
`;
const Field = styled.div<{ $w?: number; $ml?: number; $bg?: string; $border?: boolean }>`
  width: ${p => p.$w ?? 29}px;
  height: 11px;
  flex: none;
  margin-left: ${p => p.$ml ?? 0}px;
  box-sizing: border-box;
  background: ${p => p.$bg ?? '#f6f6f6'};
  border: 1px solid ${p => (p.$border === false ? 'transparent' : '#c2c2c2')};
  display: flex;
  align-items: center;
  padding-left: 2px;
  font-size: 6.4px;
  color: #444;
  & > svg { margin-left: auto; margin-right: 1px; }
`;
const Delcam = styled.div`
  margin-left: auto;
  display: flex;
  align-items: center;
  gap: 2px;
  padding-right: 3px;
`;
const DelcamWord = styled.span`
  width: 33px;
  height: 11px;
  background: #3f8ccb;
  color: #fff;
  font-size: 8.4px;
  line-height: 11px;
  text-align: center;
  letter-spacing: .2px;
`;
const DelcamOrb = styled.span`
  width: 11px;
  height: 11px;
  border-radius: 50%;
  background: #4a93c4;
  color: #17395a;
  font-size: 7px;
  line-height: 11px;
  text-align: center;
  font-weight: 700;
`;
const Taskbar = styled.div`
  height: 20px;
  flex: none;
  background: #07090b;
  display: flex;
  align-items: stretch;
`;
const TaskBtn = styled.div<{ $w?: number; $active?: boolean; $run?: boolean }>`
  width: ${p => p.$w ?? 25.2}px;
  flex: none;
  display: flex;
  align-items: center;
  justify-content: center;
  box-sizing: border-box;
  background: ${p => (p.$active ? '#34363a' : 'transparent')};
  border-bottom: 1px solid ${p => (p.$run ? '#6fa8d0' : 'transparent')};
`;
const Tray = styled.div`
  margin-left: auto;
  display: flex;
  align-items: center;
  color: #ddd;
`;
const TrayIcon = styled.div<{ $w: number }>`
  width: ${p => p.$w}px;
  flex: none;
  display: flex;
  justify-content: center;
`;
const Clock = styled.div`
  width: 36px;
  flex: none;
  text-align: center;
  font-size: 6.2px;
  line-height: 9px;
  color: #ddd;
`;

const Overlay = styled.svg`
  position: absolute;
  inset: 0;
  display: block;
  pointer-events: none;
`;

const PATHS: [string, string][] = [
  ['1-Contorneo_DS_D20plana_342', 'tpBox'],
  ['2-Vaciado_Planta_D10TR0,5_342', 'tp3d'],
  ['3-Planta_DS_D10TR0,5_342', 'tpStr'],
  ['4-Lateral_DS_D10TR0,5_342', 'tpCross'],
  ['5-Perfilado_quiebre_ext_DS_D10TR0,5_342', 'tpGreen'],
  ['6-Perfilado_quiebre_int_DS_D10TR0,5_342', 'tpGreen'],
  ['7-Planta_tacos_AC_D6red_342', 'tpStr'],
  ['8-Planta_AC_D2red_342', 'tpBox'],
  ['9-Lateral_AC_D2red_342', 'tpCross'],
  ['10-Canales_planta_prof_D1plana_342', 'tpGreen'],
  ['11-Canal_contorno_D1plana_342', 'tpCont'],
  ['12-Redondeo_contorno_D2red_342', 'tpCont'],
  ['13-Canal_planta_D1plana_342', 'tpGreen'],
  ['14-Perfilados_talon_D1plana_342', 'tpDiag'],
  ['15-Perfilado_piston_D1plana_342', 'tpFan'],
  ['16-Canal_talon_D0,8plana_342', 'tpGreen'],
  ['17-Tacos_talon_AC_D0,5plana_342', 'tpGreen'],
  ['18-Tacos_gruesos_AC_D0,5plana_342', 'tpGreen'],
  ['19-Tacos_finos_AC_D0,5plana_342', 'tpGreen'],
];
const TOOLS = ['D20plana', 'D10TR0,5', 'D6red', 'D2red', 'D1plana_larga', 'D0,8plana', 'D0,5plana_media'];

const ROWS: [string, string][] = [
  ['10,87, 121,69, 120,26', '0,91'], ['10,67, 121,69, 120,25', '2,53'], ['10,47, 121,68, 120,25', '4,14'],
  ['10,47, 121,77, 120,73', '4,14'], ['10,67, 121,77, 120,74', '2,53'], ['10,87, 121,77, 120,74', '0,91'],
  ['10,87, 121,85, 121,23', '0,91'], ['10,67, 121,85, 121,22', '2,53'], ['10,47, 121,85, 121,22', '4,14'],
  ['16,16, 121,91, 120,32', '0,91'], ['15,96, 121,91, 120,31', '2,53'], ['15,76, 121,91, 120,31', '4,14'],
  ['15,76, 122,00, 120,80', '4,14'], ['15,96, 122,00, 120,80', '2,53'], ['16,16, 121,91, 120,82', '0,91'],
  ['16,16, 121,91, 121,32', '0,91'], ['15,96, 121,91, 121,31', '2,53'], ['15,76, 121,91, 121,31', '4,14'],
  ['21,05, 122,31, 121,27', '4,14'], ['21,25, 122,11, 121,30', '2,53'], ['21,45, 121,91, 121,34', '0,91'],
  ['21,45, 121,91, 121,84', '4,14'],
];

const CX = [320, 387, 454, 522, 589];
const CY = [223, 280];

function Pocket({ x, y }: { x: number; y: number }) {
  return (
    <g fill="none">
      <rect x={x - 10} y={y - 10} width={20} height={20} fill="#0c3319" />
      <rect x={x - 7.5} y={y - 7.5} width={15} height={15} stroke="#2a8f45" strokeWidth=".9" fill="#0d3b1e" />
      <rect x={x - 5} y={y - 5} width={10} height={10} stroke="#2a9c48" strokeWidth=".9" />
      <path d={`M${x - 2.5} ${y + 2.5}V${y - 2.5}H${x + 2.5}V${y + 2.5}H${x}`} stroke="#3aa857" strokeWidth=".9" />
    </g>
  );
}

const LINES = [
  '320,225 385,230 447,230',
  '450,225 518,227',
  '320,230 512,279',
  '455,280 584,224',
  '583,224 583,280',
  '522,281 585,281',
  '315,280 388,279 447,274',
];

export default function App() {
  return (
    <Page>
      <Global />
      <TitleBar>
        <Ico k="dlgIcon" s={9} />
        <span>PowerMILL Pro 2016 Licencia FULL    [ Proyecto Editable * pruebasDavid ]</span>
        <WinControls><span>─</span><span>❐</span><span>✕</span></WinControls>
      </TitleBar>
      <MenuBar>
        <span>Fichero</span><span>Vista</span><span>Insertar</span><span>Dibujar</span><span>Herramientas</span><span>Ayuda</span>
      </MenuBar>

      <ToolRow $h={16}>
        <Strip $w={411}>
          <Slot><Ico k="folder" /></Slot><Slot><Ico k="save" /></Slot><Sep />
          <Slot><Ico k="blob" /></Slot><Sep />
          {['cube', 'path', 'stack', 'drill', 'ublue', 'pen', 'nodes', 'chip'].map(k => <Slot key={k}><Ico k={k} /></Slot>)}
          <Sep />
          <Slot><Ico k="cup" s={12} /></Slot><Sep />
          <Slot><Ico k="stripes" /></Slot><Slot><Ico k="greenbox" /></Slot>
          <Combo $w={89}>Acabado Raster<Chev /></Combo>
          <Sep />
          {['orange', 'calc', 'bin', 'ruler'].map(k => <Slot key={k}><Ico k={k} /></Slot>)}
          <Sep />
          <Slot><Ico k="tee" /></Slot><Slot><Ico k="cross" /></Slot><Sep />
          <Slot><Ico k="cam" /></Slot><CloseMark>×</CloseMark>
        </Strip>
      </ToolRow>
      <ToolRow $h={15}>
        <Strip $w={429} $pl={2}>
          <Combo $w={61}>19-Tacos_finos_AC<Chev /></Combo>
          <Slot $w={16}><Ico k="ball" /></Slot>
          <Sep $w={4} />
          {['swirl', 'swirl2', 'swirl3', 'round', 'house', 'pie', 'boxes', 'grid', 'copy', 'gauge', 'xnodes'].map(k => <Slot key={k}><Ico k={k} /></Slot>)}
          <Sep $w={3} />
          <Slot $hi><Ico k="waves" /></Slot>
          {['wedge', 'ripple', 'squares', 'faint', 'fork', 'cone', 'green2', 'green3', 'hatred', 'hatblue'].map(k => <Slot key={k}><Ico k={k} /></Slot>)}
          <Sep $w={3} />
          <Slot><Ico k="sand" /></Slot><Slot><Ico k="pin" /></Slot><Slot><Ico k="cutter" /></Slot><Slot><Ico k="blockgreen" /></Slot>
          <CloseMark>×</CloseMark>
        </Strip>
      </ToolRow>

      <Main>
        <LeftPanel>
          <PanelHead>
            <Grip />
            <span>❐</span><span>×</span>
          </PanelHead>
          <TabBar>
            <Tab $on><Ico k="tab1" s={13} /></Tab>
            <Tab $on><Ico k="earth" s={13} /></Tab>
            <Tab><Ico k="ghost" s={13} /></Tab>
          </TabBar>
          <TreeBox>
            <Tree>
              <TreeRow><Expander /><TreeGap $w={4} /><Ico k="active" s={9} /><Label>Activo</Label></TreeRow>
              <TreeRow><TreeGap $w={9} /><Ico k="machine" s={9} /><Label>Máquinas Herramienta</Label></TreeRow>
              <TreeRow><Expander /><TreeGap $w={4} /><Ico k="cn" s={9} /><Label>Programas CN</Label></TreeRow>
              <TreeRow $bold><Expander /><TreeGap $w={4} /><Ico k="traj" s={9} /><Label>Trayectorias</Label></TreeRow>
              {PATHS.map(([name, k]) => (
                <TreeRow key={name}>
                  <Expander $ml={11} /><TreeGap $w={2} /><Ico k="check" s={8} /><TreeGap $w={2} /><Ico k="bulb" s={7} /><Ico k={k} s={9} /><Label>{name}</Label>
                </TreeRow>
              ))}
              <TreeRow $bold>
                <Expander $ml={11} /><TreeGap $w={2} /><Ico k="check" s={8} /><TreeGap $w={2} /><Ico k="bulbon" s={7} /><Ico k="tpGreen" s={9} /><Label>{'> 19-Tacos_finos_AC_D0,5plana_342_1'}</Label>
              </TreeRow>
              <TreeRow><Expander /><TreeGap $w={4} /><Ico k="tools" s={9} /><Label>Herramientas</Label></TreeRow>
              {TOOLS.map((name, i) => (
                <TreeRow key={name}>
                  <Expander $ml={11} /><TreeGap $w={12} /><Ico k="bulb" s={7} /><TreeGap $w={1} /><Ico k="tool" s={8} /><Label $hl={i === 6}>{name}</Label>
                </TreeRow>
              ))}
              <TreeRow><Expander /><TreeGap $w={4} /><Ico k="limit" s={9} /><Label>Límites</Label></TreeRow>
              <TreeRow><Expander /><TreeGap $w={4} /><Ico k="pattern" s={9} /><Label>Patrones</Label></TreeRow>
            </Tree>
            <VScroll $w={9} $thumbTop={10} $thumbH={248}>
              <ScrollArrow><Chev up /></ScrollArrow>
              <ScrollArrow $bottom><Chev /></ScrollArrow>
            </VScroll>
          </TreeBox>
        </LeftPanel>

        <Viewport>
          <SceneSvg width={763} height={351} viewBox="221 54 763 351">
            {CY.map(y => CX.map(x => <Pocket key={`${x}-${y}`} x={x} y={y} />))}
            {LINES.map(p => <polyline key={p} points={p} fill="none" stroke="#a32fb2" strokeWidth="1" />)}
            <circle cx={319} cy={281} r={2} fill="none" stroke="#e8e8e8" />
            <path d="M242 386V371M242 386H254" stroke="#e8e8e8" />
            <rect x={239} y={380} width={5} height={6} fill="#2a6fc0" />
            <text x={239} y={369} fill="#eee" fontSize="8" fontFamily="Lato">Y</text>
            <text x={256} y={387} fill="#eee" fontSize="8" fontFamily="Lato">X</text>
          </SceneSvg>
          <Dialog>
            <DialogTitle>
              <Ico k="dlgIcon" s={10} />
              <span>Reordenar Segmentos Trayectoria</span>
              <DialogButtons><span>?</span><span>×</span></DialogButtons>
            </DialogTitle>
            <DialogBody>
              <DialogTools>
                {['dlgX', 'dlgTop', 'dlgUp', 'dlgDown', 'dlgBot', 'dlgSwap', 'dlgGlobe', 'dlgList', 'dlgDots', 'dlgMore'].map(k => <DialogTool key={k}><Ico k={k} /></DialogTool>)}
              </DialogTools>
              <TablePanel>
                <TableTop>
                  <TableList>
                    <Cols $head>
                      <HeadCell>#</HeadCell><HeadCell>Punto inicial</HeadCell><HeadCell>Punto final</HeadCell><HeadCell>Longitud</HeadCell>
                    </Cols>
                    {ROWS.map(([p, l], i) => (
                      <Cols key={i}><span>{i}</span><span>{p}</span><span>{p}</span><span>{l}</span></Cols>
                    ))}
                  </TableList>
                  <VScroll $w={9} $thumbTop={9} $thumbH={47}>
                    <ScrollArrow><Chev up /></ScrollArrow>
                    <ScrollArrow $bottom><Chev /></ScrollArrow>
                  </VScroll>
                </TableTop>
                <HScroll>
                  <Chev left /><HThumb />
                  <TreeGap $w={22} />
                  <Chev right />
                </HScroll>
              </TablePanel>
            </DialogBody>
          </Dialog>
        </Viewport>

        <RightBar>
          <RSlot><Ico k="wire" /></RSlot><RSlot><Ico k="wire2" /></RSlot><RSlot $h={12}><Ico k="wire3" /></RSlot><RSlot $h={12}><Ico k="wire4" /></RSlot>
          <RSlot><Ico k="zoomi" /></RSlot><RSlot><Ico k="refresh" /></RSlot><RSlot $h={12}><Ico k="blackx" /></RSlot><RSlot><Ico k="blacksq" /></RSlot>
          <RSep />
          <RSlot $h={10}><Ico k="part" /></RSlot>
          <RSep />
          <RSlot><Ico k="sphere" /></RSlot><RSlot $hi><Ico k="orb" /></RSlot>
          <RSep />
          <RSlot $h={14}><Ico k="cursorbox" /></RSlot><RSlot $h={15}><Ico k="keys" /></RSlot>
          <CloseMark>×</CloseMark>
        </RightBar>
      </Main>

      <LowerBar>
        <Strip $w={284} $pl={2}>
          <Slot $w={12}><Ico k="tool" s={10} /></Slot>
          <Slot $w={14}><Chev /></Slot>
          <Slot $w={1} />
          <Slot><Ico k="hatch1" /></Slot><Slot><Ico k="hatch2" /></Slot><Slot><Ico k="hatch3" /></Slot>
          <Combo $w={65} $bg="#e8e8e8"><span /><Chev /></Combo>
          <Slot $w={12}><Ico k="ball" s={10} /></Slot>
          <Sep $w={10} />
          <Slot><Ico k="pick" /></Slot>
          <TreeGap $w={25} />
          <Sep $w={5} />
          <Slot><Ico k="fork" dim /></Slot><Slot><Ico k="blockgreen" dim /></Slot><Slot><Ico k="sand" dim /></Slot>
          <Sep $w={7} />
          <Slot><Ico k="pin" dim /></Slot><Slot><Ico k="xnodes" dim /></Slot>
          <CloseMark>×</CloseMark>
        </Strip>
      </LowerBar>

      <ConsoleRow>
        <ConsoleSide>×</ConsoleSide>
        <ConsoleBox>
          <ConsoleText>{`Process Command : [DELETE SELECTION\\r]

PowerMILL >
Process Command : [DELETE MODEL "1" SELECTED\\r]

PowerMILL >
Process Command : [ \\r]

PowerMILL >
Process Command : [FORM TPLIST\\r]

PowerMILL >`}</ConsoleText>
          <ConsoleScroll><Chev /></ConsoleScroll>
        </ConsoleBox>
      </ConsoleRow>

      <StatusBar>
        <Slot $w={12}><Ico k="axes" /></Slot>
        <Field $w={46} $ml={1} $bg="#e8e8e8" $border={false}><Chev /></Field>
        <Slot $w={15}><Ico k="wheels" /></Slot><Slot $w={15}><Ico k="wheels" /></Slot><Slot $w={14} $hi><Ico k="wheelsblue" /></Slot>
        <TreeGap $w={4} />
        <Slot $w={15}><Ico k="meshgrid" /></Slot>
        <Field $w={28} $ml={1} $bg="#ececec" $border={false} />
        <Field $ml={7}>57,2405</Field>
        <Field $ml={2}>123,745</Field>
        <Field $ml={2}>0</Field>
        <Slot $w={13}><Ico k="meshgrid" /></Slot>
        <Slot $w={13}><Ico k="diag" /></Slot>
        <Field $w={46} $ml={2} $bg="#ececec" $border={false} />
        <TreeGap $w={10} />
        <Slot $w={13}><Ico k="statusgreen" /></Slot>
        <TreeGap $w={4} />
        <Slot $w={14}><Ico k="statusruler" /></Slot>
        <Field $ml={1}>mm</Field>
        <Slot $w={16}><Ico k="crosshair" /></Slot>
        <Field>0,01</Field>
        <Slot $w={16}><Ico k="toolin" /></Slot>
        <Field>0,0</Field>
        <Slot $w={15}><Ico k="dia" /></Slot>
        <Field $w={30} />
        <Slot $w={15}><Ico k="angle" /></Slot>
        <Field $w={30} />
        <Delcam>
          <DelcamWord>Delcam</DelcamWord>
          <DelcamOrb>T</DelcamOrb>
        </Delcam>
      </StatusBar>

      <Taskbar>
        <TaskBtn $w={27.5}><Ico k="win" s={10} /></TaskBtn>
        <TaskBtn $run><Ico k="explorer" s={11} /></TaskBtn>
        <TaskBtn $run><Ico k="opera" s={13} /></TaskBtn>
        <TaskBtn><Ico k="gadget" s={12} /></TaskBtn>
        <TaskBtn $active $run><Ico k="pm" s={13} /></TaskBtn>
        <TaskBtn $run><Ico k="vs" s={12} /></TaskBtn>
        <TaskBtn><Ico k="telegram" s={12} /></TaskBtn>
        <Tray>
          <TrayIcon $w={12}><Chev up c="#ddd" /></TrayIcon>
          <TrayIcon $w={13}><Ico k="monitor" s={10} /></TrayIcon>
          <TrayIcon $w={12}><Ico k="speaker" s={10} /></TrayIcon>
          <Clock>15:34<br />18/07/2017</Clock>
          <TrayIcon $w={24}><Ico k="notif" s={11} /></TrayIcon>
          <TrayIcon $w={5} />
        </Tray>
      </Taskbar>

      <Overlay width={999} height={562} viewBox="0 0 999 562">
        <g fill="none" stroke="#c4162a" strokeWidth="1.700" strokeLinecap="round" strokeLinejoin="round">
          <path d="M698 73C705 88 712 100 717 113S724 128 727 135" />
          <path d="M713 131C719 130 724 132 727 135C730 130 732 124 735 120" />
          <path d="M813 75C806 88 798 108 790 130C790 134 794 138 797 140" />
          <path d="M783 115C786 122 789 130 792 138C798 130 806 122 812 115" />
          <path d="M699 157C708 159 718 160 727 160S750 160 759 160" />
          <path d="M763 158C772 157 782 157 790 157S810 157 820 157" />
          <path d="M824 157C825 151 834 149 838 151C844 154 844 160 838 162C833 164 826 163 824 160" />
          <path d="M832 150L838 152" />
        </g>
      </Overlay>
    </Page>
  );
}
